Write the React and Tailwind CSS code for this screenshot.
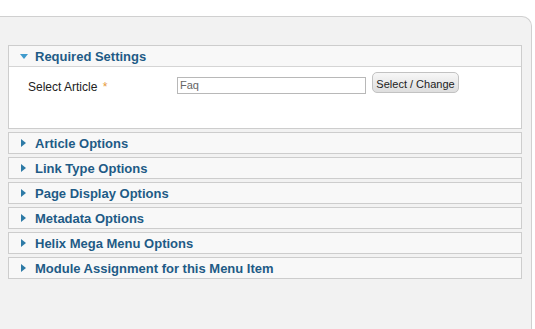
export default function App() {
  const collapsed = [
    "Article Options",
    "Link Type Options",
    "Page Display Options",
    "Metadata Options",
    "Helix Mega Menu Options",
    "Module Assignment for this Menu Item",
  ];
  const font = { fontFamily: '"Liberation Sans", Arial, sans-serif' };
  return (
    <div className="w-[535px] h-[329px] bg-white overflow-hidden" style={font}>
      <div className="mt-[16px] w-[532px] h-[313px] bg-[#f2f2f2] border-t border-r border-[#d0d0d0] rounded-tr-[10px] pt-[28px] pl-[8px]">
        <div className="w-[514px] border border-[#cdcdcd]">
          <div className="h-[21px] bg-[#f8f8f8] border-b border-[#d5d5d5] flex items-center pl-[11px]">
            <svg width="8" height="5" viewBox="0 0 8 5" className="mr-[7px] mt-[1px]">
              <polygon points="0,0 8,0 4,5" fill="#3f9bcd" />
            </svg>
            <span className="text-[13px] font-bold text-[#1e5b86] leading-none">Required Settings</span>
          </div>
          <div className="h-[61px] bg-white pt-[5px] pl-[19px] flex items-start">
            <div className="w-[149px] mt-[8px] text-[12px] leading-[15px] text-[#222]">
              Select Article <span className="text-[#e69b3b] ml-[2px]">*</span>
            </div>
            <div className="mt-[5px] w-[189px] h-[17px] border border-[#b8b8b8] bg-white text-[11px] leading-[15px] text-[#666] pl-[2px]">
              Faq
            </div>
            <div className="ml-[6px] w-[87px] h-[21px] rounded-[5px] border border-[#c2c2c2] bg-gradient-to-b from-[#f7f7f7] to-[#dedede] text-[11px] leading-[20px] pt-[1px] text-[#222] text-center">
              Select / Change
            </div>
          </div>
        </div>
        <div className="flex flex-col gap-[3px] mt-[3px]">
          {collapsed.map((t) => (
            <div
              key={t}
              className="w-[514px] h-[22px] border border-[#cdcdcd] bg-[#f8f8f8] flex items-center pl-[12px]"
            >
              <svg width="5" height="8" viewBox="0 0 5 8" className="mr-[9px]">
                <polygon points="0,0 5,4 0,8" fill="#2d7aa6" />
              </svg>
              <span className="text-[13px] font-bold text-[#1e5b86] leading-none">{t}</span>
            </div>
          ))}
        </div>
      </div>
    </div>
  );
}
